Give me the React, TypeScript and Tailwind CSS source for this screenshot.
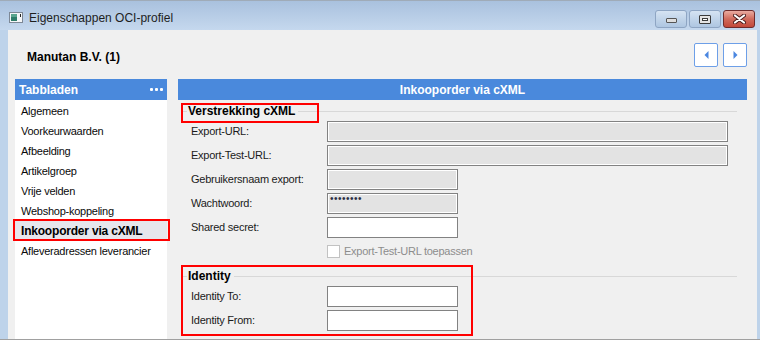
import React from "react";

const TABS = [
  "Algemeen",
  "Voorkeurwaarden",
  "Afbeelding",
  "Artikelgroep",
  "Vrije velden",
  "Webshop-koppeling",
  "Inkooporder via cXML",
  "Afleveradressen leverancier",
];
const ACTIVE_TAB = "Inkooporder via cXML";

// red annotation rectangle drawn over the dialog
function Marker({ className }: { className: string }) {
  return <div className={`pointer-events-none absolute border-2 border-[#ff0000] ${className}`} />;
}

function TextBox({ wide, disabled, children }: { wide?: boolean; disabled?: boolean; children?: React.ReactNode }) {
  return (
    <div
      className={`h-[21px] border border-[#828282] pl-[2px] ${wide ? "w-[401px]" : "w-[131px]"} ${
        disabled ? "bg-[#e3e3e3] shadow-[inset_0_0_0_1px_#ffffff]" : "bg-white"
      }`}
    >
      {children}
    </div>
  );
}

function Field({ label, children }: { label: string; children: React.ReactNode }) {
  return (
    <div className="flex h-[21px] items-center">
      <span className="w-[144px] pl-[8px] text-[11px] tracking-[-0.25px] text-[#1b1b1b]">{label}</span>
      {children}
    </div>
  );
}

function Legend({ title }: { title: string }) {
  return (
    <div className="flex h-[15px] items-center">
      <div className="h-px w-[4px] bg-[#d8d8d8]" />
      <span className="ml-[1px] mr-[3px] text-[12px] font-bold leading-[15px] text-black">{title}</span>
      <div className="h-px flex-1 bg-[#d8d8d8]" />
    </div>
  );
}

function WindowButtons() {
  return (
    <div className="ml-auto mr-[5px] mt-[9px] flex">
      <div className="flex h-[18px] w-[32px] items-end justify-center rounded-[3px] border border-[#8ea5c3] bg-gradient-to-b from-[#d5e3f2] to-[#aec6e1] pb-[4px]">
        <div className="h-[5px] w-[11px] rounded-[1px] border border-[#555] bg-[#dedede]" />
      </div>
      <div className="ml-[2px] flex h-[18px] w-[32px] items-center justify-center rounded-[3px] border border-[#8ea5c3] bg-gradient-to-b from-[#d5e3f2] to-[#aec6e1]">
        <div className="flex h-[9px] w-[12px] items-center justify-center rounded-[1px] border border-[#3c3c3c] bg-[#e4e4e4]">
          <div className="h-[3px] w-[6px] border border-[#3c3c3c] bg-white" />
        </div>
      </div>
      <div className="ml-[2px] flex h-[18px] w-[32px] items-center justify-center rounded-[3px] border border-[#6e2b2b] bg-gradient-to-b from-[#e9aba1] via-[#d06a5c] to-[#c2483a]">
        <svg width="13" height="10" viewBox="0 0 13 10">
          <path d="M2 1.5 L11 8.5 M11 1.5 L2 8.5" stroke="#4a1c1c" strokeWidth="4" strokeLinecap="round" />
          <path d="M2 1.5 L11 8.5 M11 1.5 L2 8.5" stroke="#ffffff" strokeWidth="2.2" strokeLinecap="round" />
        </svg>
      </div>
    </div>
  );
}

function NavButton({ dir }: { dir: "left" | "right" }) {
  return (
    <div className="flex h-[24px] w-[24px] items-center justify-center rounded-[2px] border border-[#6d9fe8] bg-white">
      <svg width="5" height="8" viewBox="0 0 5 8">
        {dir === "left" ? <path d="M4.5 0 L0.5 4 L4.5 8 Z" fill="#4a86e0" /> : <path d="M0.5 0 L4.5 4 L0.5 8 Z" fill="#4a86e0" />}
      </svg>
    </div>
  );
}

export default function App() {
  return (
    <div className="flex h-[340px] w-[760px] flex-col bg-[#bed3ea] font-['Liberation_Sans',Arial,sans-serif] text-black">
      {/* Title bar */}
      <div className="flex h-[30px] items-start border-t border-[#9fabb8] bg-gradient-to-b from-[#a9c1de] to-[#c5d8ee]">
        <svg className="ml-[9px] mt-[11px]" width="14" height="11" viewBox="0 0 14 11">
          <rect x="0.5" y="0.5" width="13" height="10" fill="#f4f6f8" stroke="#7d8896" />
          <rect x="2" y="2" width="6" height="7" fill="#2e7d6a" />
          <rect x="2" y="2" width="6" height="3" fill="#5aa58f" />
          <rect x="11" y="2" width="1" height="3" fill="#222" />
        </svg>
        <span className="ml-[6px] mt-[9px] text-[12px] leading-[16px] text-[#1e1e1e]">Eigenschappen OCI-profiel</span>
        <WindowButtons />
      </div>

      {/* Client area */}
      <div className="ml-[8px] mr-[3px] flex flex-1 flex-col bg-[#f0f0f0]">
        <div className="flex items-start pl-[19px] pr-[10px] pt-[13px]">
          <span className="mt-[6px] text-[12px] font-bold leading-[16px]">Manutan B.V. (1)</span>
          <div className="ml-auto flex gap-[5px]">
            <NavButton dir="left" />
            <NavButton dir="right" />
          </div>
        </div>

        <div className="mt-[12px] flex flex-1 pl-[7px] pr-[10px]">
          {/* Tabbladen */}
          <div className="flex w-[152px] flex-col">
            <div className="flex h-[21px] items-center justify-between bg-[#4a89dc] pl-[4px] pr-[4px]">
              <span className="text-[12px] font-bold text-white">Tabbladen</span>
              <div className="flex gap-[2px]">
                <div className="h-[3px] w-[3px] rounded-[1px] bg-white" />
                <div className="h-[3px] w-[3px] rounded-[1px] bg-white" />
                <div className="h-[3px] w-[3px] rounded-[1px] bg-white" />
              </div>
            </div>
            <div className="flex-1 bg-white pt-[1px]">
              {TABS.map((t) =>
                t === ACTIVE_TAB ? (
                  <div key={t} className="relative flex h-[20px] items-center bg-[#e6e6ec] pl-[6px] text-[12px] font-bold tracking-[-0.2px]">
                    {t}
                    <Marker className="-left-[2px] -right-[3px] -top-[2px] bottom-0" />
                  </div>
                ) : (
                  <div key={t} className="flex h-[20px] items-center pl-[6px] text-[11px] tracking-[-0.25px] text-[#0a0a0a]">
                    {t}
                  </div>
                ),
              )}
            </div>
          </div>

          {/* Inkooporder via cXML */}
          <div className="ml-[11px] flex flex-1 flex-col">
            <div className="flex h-[21px] items-center justify-center bg-[#4a89dc] text-[12px] font-bold text-white">
              Inkooporder via cXML
            </div>

            <div className="relative ml-[5px] mr-[10px] mt-[4px]">
              <Legend title="Verstrekking cXML" />
              <Marker className="-left-[2px] -top-[1px] h-[20px] w-[138px]" />
              <div className="mt-[2px] flex flex-col gap-[3px]">
                <Field label="Export-URL:">
                  <TextBox wide disabled />
                </Field>
                <Field label="Export-Test-URL:">
                  <TextBox wide disabled />
                </Field>
                <Field label="Gebruikersnaam export:">
                  <TextBox disabled />
                </Field>
                <Field label="Wachtwoord:">
                  <TextBox disabled>
                    <span className="block text-[10px] leading-[10px] tracking-[0.5px] text-[#2a2f45]">••••••••</span>
                  </TextBox>
                </Field>
                <Field label="Shared secret:">
                  <TextBox />
                </Field>
              </div>
              <div className="mt-[7px] flex h-[13px] items-center pl-[144px]">
                <div className="h-[13px] w-[13px] border border-[#c2c2c2] bg-white" />
                <span className="ml-[4px] text-[11px] tracking-[-0.25px] text-[#8d8d8d]">Export-Test-URL toepassen</span>
              </div>
            </div>

            <div className="relative ml-[5px] mr-[10px] mt-[11px]">
              <Legend title="Identity" />
              <div className="mt-[2px] flex flex-col gap-[3px]">
                <Field label="Identity To:">
                  <TextBox />
                </Field>
                <Field label="Identity From:">
                  <TextBox />
                </Field>
              </div>
              <Marker className="-bottom-[5px] -left-[2px] -top-[4px] w-[292px]" />
            </div>
          </div>
        </div>
      </div>
      <div className="h-px bg-[#a0a0a0]" />
    </div>
  );
}
